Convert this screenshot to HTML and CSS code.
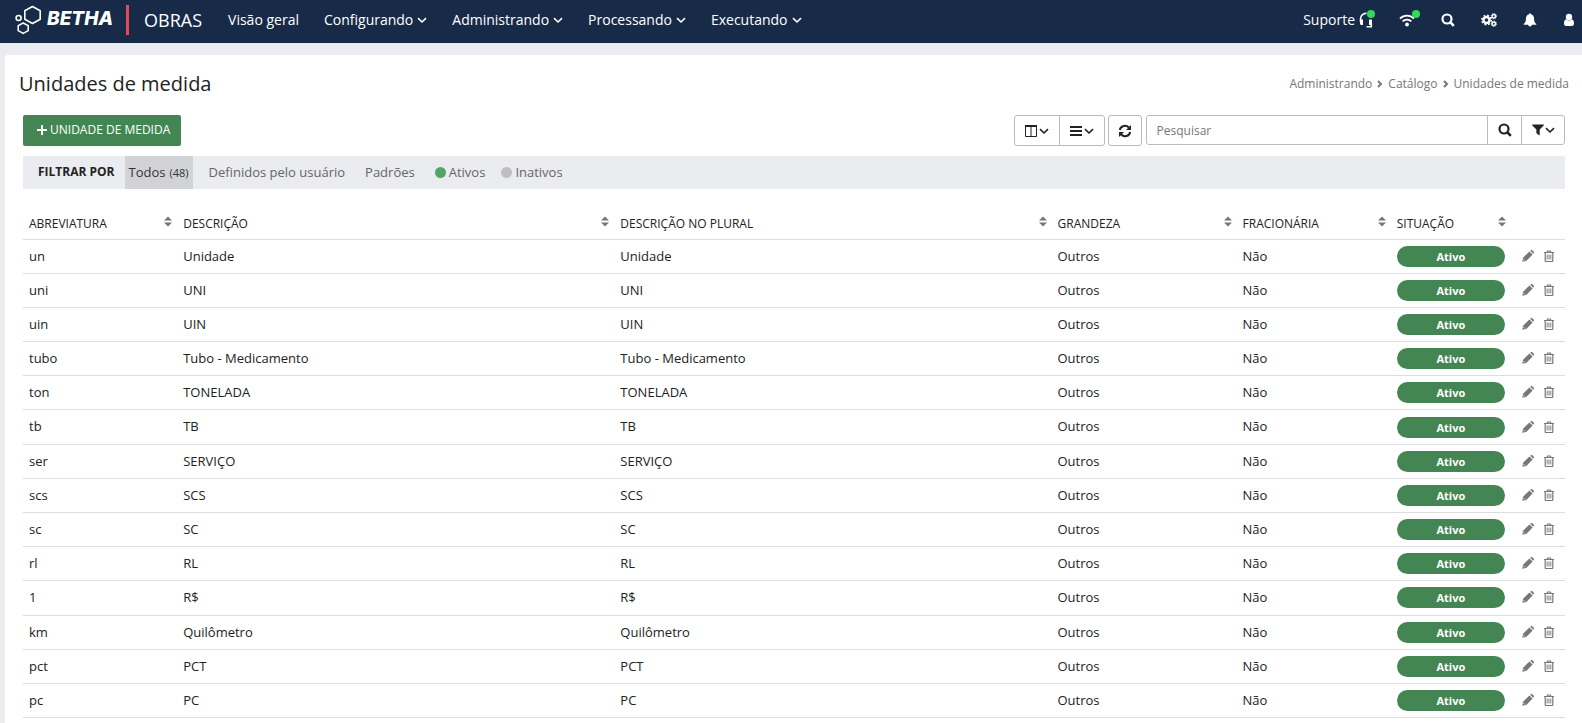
FILE: index.html
```
<!DOCTYPE html>
<html lang="pt-BR">
<head>
<meta charset="utf-8">
<meta name="viewport" content="width=device-width, initial-scale=1">
<title>Unidades de medida</title>
<link rel="stylesheet" href="styles.css">
</head>
<body>
<svg class="sprite" aria-hidden="true">
  <symbol id="chevron" viewBox="0 0 10 10"><path d="M1 3.200 5 7l4-3.800" fill="none" stroke="currentColor" stroke-width="1.600"/></symbol>
  <symbol id="chevron-right" viewBox="0 0 8 10"><path d="M2 2 5 5 2 8" fill="none" stroke="currentColor" stroke-width="2"/></symbol>
  <symbol id="plus" viewBox="0 0 12 12"><path d="M6 1v10M1 6h10" stroke="currentColor" stroke-width="2"/></symbol>
  <symbol id="search" viewBox="0 0 14 14"><circle cx="6" cy="6" r="4.500" fill="none" stroke="currentColor" stroke-width="2.200"/><path d="m9.200 9.200 3.600 3.600" stroke="currentColor" stroke-width="2.600"/></symbol>
  <symbol id="headset" viewBox="0 0 14 16"><path d="M1.500 10V7a5.500 5.500 0 0 1 6-5.600" fill="none" stroke="currentColor" stroke-width="1.600"/><path d="M1 7.500h3V13H2.600A1.600 1.600 0 0 1 1 11.400zM10 7.500h3V13h-3z" fill="currentColor"/><path d="M12.300 12v2.700H7.500" fill="none" stroke="currentColor" stroke-width="1.600"/></symbol>
  <symbol id="wifi" viewBox="0 0 16 14"><path d="M1 5.500a10 10 0 0 1 14 0M3.600 8.400a6.300 6.300 0 0 1 8.800 0" fill="none" stroke="currentColor" stroke-width="1.800"/><circle cx="8" cy="11.500" r="1.900" fill="currentColor"/></symbol>
  <symbol id="cogs" viewBox="0 0 16 14"><g fill="none" stroke="currentColor"><circle cx="5.500" cy="7" r="3" stroke-width="2.400"/><circle cx="5.500" cy="7" r="4.700" stroke-width="1.600" stroke-dasharray="1.850"/><circle cx="12.800" cy="3.200" r="1.700" stroke-width="1.500"/><circle cx="12.800" cy="3.200" r="2.700" stroke-width="1" stroke-dasharray="1.060"/><circle cx="12.800" cy="10.800" r="1.700" stroke-width="1.500"/><circle cx="12.800" cy="10.800" r="2.700" stroke-width="1" stroke-dasharray="1.060"/></g></symbol>
  <symbol id="bell" viewBox="0 0 14 14"><path d="M7 0.300c.6 0 .9.400.9.900C10 1.700 11 3.300 11 5.500c0 3 1 4.500 2.500 5.500 0 .6-.4.800-.9.800H8.800a1.800 1.800 0 0 1-3.600 0H1.400c-.5 0-.9-.2-.9-.8C2 10 3 8.500 3 5.500c0-2.200 1-3.800 3.100-4.300 0-.5.3-.9.900-.9z" fill="currentColor"/></symbol>
  <symbol id="user" viewBox="0 0 12 14"><circle cx="6" cy="4" r="3.200" fill="currentColor"/><path d="M3.300 6.300a4 4 0 0 0 5.400 0C10.500 6.700 11 8.500 11 10.600 11 12 10.200 13 9 13H3c-1.200 0-2-1-2-2.400 0-2.100.5-3.900 2.300-4.300z" fill="currentColor"/></symbol>
  <symbol id="columns" viewBox="0 0 14 14"><path d="M1.500 2v10.500h11V2M7 2v10.500" fill="none" stroke="currentColor"/><path d="M1 2h12" stroke="currentColor" stroke-width="2"/></symbol>
  <symbol id="bars" viewBox="0 0 14 14"><path d="M1 3h12M1 7h12M1 11h12" stroke="currentColor" stroke-width="2"/></symbol>
  <symbol id="refresh" viewBox="0 0 14 14"><path d="M1.800 6A5.200 5.200 0 0 1 10.800 3.500M12.200 8A5.200 5.200 0 0 1 3.200 10.500" fill="none" stroke="currentColor" stroke-width="2"/><path d="M13 1v5H8zM1 13V8h5z" fill="currentColor"/></symbol>
  <symbol id="filter" viewBox="0 0 12 14"><path d="M.7 1.500h10.600c.6 0 .8.600.4 1L7.700 6.600v5.900L4.400 10.200V6.600L.3 2.500c-.4-.4-.2-1 .4-1z" fill="currentColor"/></symbol>
  <symbol id="sort" viewBox="0 0 8 11"><path d="M4 .5 8 4.600H0zM4 10.500 8 6.400H0z" fill="currentColor"/></symbol>
  <symbol id="pencil" viewBox="0 0 12 12"><path d="m.3 11.700.8-4 6.300-6.300 3.200 3.200-6.300 6.300zM8.200.8 8.900.2c.4-.4 1-.4 1.400 0l1.500 1.500c.4.400.4 1 0 1.400l-.6.700z" fill="currentColor"/><path d="m1.600 9.100 1.300 1.300" stroke="#fff" stroke-width=".8"/></symbol>
  <symbol id="trash" viewBox="0 0 11 12"><path d="M.5 2.500h10M3.500 2.500l.6-1.500h2.800l.6 1.500M1.700 2.500v8.200c0 .5.300.8.700.8h6.200c.4 0 .7-.3.700-.8V2.500" fill="none" stroke="currentColor" stroke-width="1.200"/><path d="M3.700 4.500v5M5.500 4.500v5M7.300 4.500v5" stroke="currentColor" stroke-width=".9"/></symbol>
</svg>

<header class="topbar">
  <a class="brand" href="#" aria-label="Betha">
    <svg class="brand-mark" viewBox="0 0 28 30" aria-hidden="true"><g fill="none" stroke="currentColor" stroke-width="1.600" stroke-linejoin="round"><path d="m17.500 1.500 7.700 4.300v8.400l-7.700 4.300-7.700-4.300V5.800z"/><path d="m8.200 18 5 2.600v5l-5 2.800-5-2.800v-5z"/><circle cx="3.600" cy="13" r="2.500"/></g></svg>
    <span>BETHA</span>
  </a>
  <span class="product">OBRAS</span>
  <nav class="menu">
    <a href="#">Visão geral</a>
    <a href="#">Configurando <svg class="chev"><use href="#chevron"/></svg></a>
    <a href="#">Administrando <svg class="chev"><use href="#chevron"/></svg></a>
    <a href="#">Processando <svg class="chev"><use href="#chevron"/></svg></a>
    <a href="#">Executando <svg class="chev"><use href="#chevron"/></svg></a>
  </nav>
  <div class="tools">
    <a class="status" href="#">Suporte <svg class="icon-head"><use href="#headset"/></svg></a>
    <button class="status" aria-label="Conexão"><svg class="icon-wide"><use href="#wifi"/></svg></button>
    <button aria-label="Buscar"><svg class="icon"><use href="#search"/></svg></button>
    <button aria-label="Configurações"><svg class="icon-wide"><use href="#cogs"/></svg></button>
    <button aria-label="Notificações"><svg class="icon"><use href="#bell"/></svg></button>
    <button aria-label="Usuário"><svg class="icon-slim"><use href="#user"/></svg></button>
  </div>
</header>

<main class="page">
  <div class="heading">
    <h1>Unidades de medida</h1>
    <nav class="crumbs" aria-label="Trilha">
      <a href="#">Administrando</a><svg class="crumb-sep"><use href="#chevron-right"/></svg>
      <a href="#">Catálogo</a><svg class="crumb-sep"><use href="#chevron-right"/></svg>
      <span>Unidades de medida</span>
    </nav>
  </div>

  <div class="content">
    <div class="toolbar">
      <button class="primary"><svg class="icon-slim"><use href="#plus"/></svg>UNIDADE DE MEDIDA</button>
      <div class="group">
        <button class="wide" aria-label="Colunas"><svg class="icon"><use href="#columns"/></svg><svg class="chev"><use href="#chevron"/></svg></button>
        <button class="wide" aria-label="Densidade"><svg class="icon"><use href="#bars"/></svg><svg class="chev"><use href="#chevron"/></svg></button>
      </div>
      <div class="group"><button aria-label="Atualizar"><svg class="icon"><use href="#refresh"/></svg></button></div>
      <form class="group search">
        <input type="text" placeholder="Pesquisar" aria-label="Pesquisar">
        <button type="button" aria-label="Pesquisar"><svg class="icon"><use href="#search"/></svg></button>
        <button type="button" class="wide" aria-label="Filtros"><svg class="icon-slim"><use href="#filter"/></svg><svg class="chev"><use href="#chevron"/></svg></button>
      </form>
    </div>

    <div class="filters">
      <strong>FILTRAR POR</strong>
      <a class="active" href="#">Todos <small>(48)</small></a>
      <a href="#">Definidos pelo usuário</a>
      <a href="#">Padrões</a>
      <a class="state" href="#"><i class="dot dot-on"></i>Ativos</a>
      <a class="state" href="#"><i class="dot"></i>Inativos</a>
    </div>

    <table class="units">
      <colgroup><col class="c-abbr"><col class="c-desc"><col class="c-desc"><col class="c-kind"><col class="c-frac"><col class="c-state"><col></colgroup>
      <thead>
        <tr id="head"></tr>
      </thead>
      <tbody id="rows"></tbody>
    </table>
  </div>
</main>
<script src="app.js"></script>
</body>
</html>
```
FILE: styles.css
```
* { box-sizing: border-box; }
body {
  margin: 0;
  background: #ebecf0;
  color: #222;
  font: 13px/1.4 "Open Sans", "Noto Sans", sans-serif;
}
a { color: inherit; text-decoration: none; }
button { font: inherit; color: inherit; background: none; border: 0; padding: 0; cursor: pointer; }
svg { display: block; flex: none; }
.sprite { display: none; }
.icon { width: 14px; height: 14px; }
.icon-wide { width: 16px; height: 14px; }
.icon-slim { width: 12px; height: 14px; }
.icon-head { width: 14px; height: 16px; }
.chev { width: 10px; height: 10px; }

.topbar {
  display: flex;
  align-items: center;
  height: 43px;
  padding: 0 7px 4px 15px;
  background: #172b48;
  color: #fff;
  font-size: 14px;
}
.brand { display: flex; align-items: center; gap: 4px; font-family: Inter, "Open Sans", sans-serif; font-size: 19px; font-weight: 800; font-style: italic; }
.brand-mark { width: 28px; height: 30px; }
.product {
  margin-left: 13px;
  padding-left: 15px;
  border-left: 3px solid #e5475f;
  font-size: 18px;
  line-height: 30px;
}
.menu { display: flex; gap: 25px; margin-left: 26px; }
.menu a, .tools a { display: flex; align-items: center; gap: 4px; }
.tools { display: flex; align-items: center; gap: 26px; margin-left: auto; }
.status { position: relative; }
.status::after {
  content: "";
  position: absolute;
  top: -3px;
  right: -5px;
  width: 8px;
  height: 8px;
  border-radius: 50%;
  background: #2fdb57;
}
a.status::after { top: 0; right: -2px; }

.page { min-height: calc(100vh - 55px); margin: 12px 0 0 5px; padding: 13px 13px 6px 14px; background: #fff; border-top-left-radius: 3px; }
.heading { display: flex; justify-content: space-between; align-items: center; }
h1 { margin: 0; font-size: 20px; font-weight: 400; line-height: 32px; }
.crumbs { display: flex; align-items: center; gap: 4px; color: #777; font-size: 12px; }
.crumb-sep { width: 8px; height: 10px; }
.content { padding: 15px 4px 0; }

.toolbar { display: flex; align-items: flex-start; gap: 3px; }
.primary {
  display: flex;
  align-items: center;
  gap: 2px;
  height: 31px;
  margin-right: auto;
  padding: 0 11px 1px 13px;
  border-radius: 2px;
  background: #448653;
  color: #fff;
  font-size: 12px;
}
.group { display: flex; border: 1px solid #bbb; border-radius: 3px; }
.group button { display: flex; align-items: center; justify-content: center; gap: 1px; width: 32px; height: 29px; }
.group button.wide { width: 44px; }
.group > * + * { border-left: 1px solid #bbb; }
.group .wide + .wide { width: 45px; }
.search { width: 27.2%; margin-left: 1px; }
.search input { flex: 1; min-width: 0; height: 28px; padding: 0 10px; border: 0; border-radius: 3px; background: #fff; font: inherit; font-size: 12px; }
.search input::placeholder { color: #777; }
.group.search button { width: 34px; height: 28px; }
.group.search button.wide { width: 43px; }

.filters { display: flex; align-items: center; height: 33px; margin-top: 10px; padding-left: 15px; background: #ebecf0; color: #666; }
.filters strong { margin-right: 10px; color: #222; font-size: 12px; font-weight: 700; }
.filters a { display: flex; align-items: center; gap: 4px; margin-right: 16px; padding: 0 2px; line-height: 33px; }
.filters .active { margin-right: 14px; padding: 0 4px; background: #d2d3d6; color: #333; }
.filters .state { gap: 3px; margin-right: 12px; }
.filters small { font-size: 11px; }
.dot { width: 11px; height: 11px; border-radius: 50%; background: #bfbfbf; }
.dot-on { background: #53a566; }

.units { width: 100%; margin-top: 19px; table-layout: fixed; border-collapse: collapse; }
.c-abbr, .c-frac { width: 10%; }
.c-desc { width: 28.35%; }
.c-kind { width: 12%; }
.c-state { width: 7.8%; }
.units th, .units td { padding: 0 6px; border-bottom: 1px solid #ddd; text-align: left; white-space: nowrap; }
.units th { height: 31px; padding-top: 3px; font-size: 12px; font-weight: 400; }
.units td { padding-top: 7px; padding-bottom: 8px; }
.head-cell { display: flex; justify-content: space-between; }
.units th .head-cell { margin-right: -1px; }
.head-cell svg { width: 8px; height: 11px; color: #777; }
.badge { display: block; margin: -1px 0 -2px; border-radius: 11px; background: #448653; color: #fff; font-size: 11px; font-weight: 700; line-height: 21px; text-align: center; }
.actions { display: flex; gap: 9px; padding-left: 5px; color: #777; }
.actions svg { width: 12px; height: 12px; }
```
FILE: app.js
```
const heads = ["ABREVIATURA", "DESCRIÇÃO", "DESCRIÇÃO NO PLURAL", "GRANDEZA", "FRACIONÁRIA", "SITUAÇÃO"];
const units = [
  ["un", "Unidade"], ["uni", "UNI"], ["uin", "UIN"], ["tubo", "Tubo - Medicamento"],
  ["ton", "TONELADA"], ["tb", "TB"], ["ser", "SERVIÇO"], ["scs", "SCS"], ["sc", "SC"],
  ["rl", "RL"], ["1", "R$"], ["km", "Quilômetro"], ["pct", "PCT"], ["pc", "PC"]
];
document.getElementById("head").innerHTML = heads.map(h =>
  `<th scope="col"><div class="head-cell">${h}<svg><use href="#sort"/></svg></div></th>`).join("") + "<th></th>";
document.getElementById("rows").innerHTML = units.map(([abbr, name]) =>
  `<tr><td>${abbr}</td><td>${name}</td><td>${name}</td><td>Outros</td><td>Não</td>
  <td><span class="badge">Ativo</span></td>
  <td><div class="actions"><button aria-label="Editar ${abbr}"><svg><use href="#pencil"/></svg></button>
  <button aria-label="Excluir ${abbr}"><svg><use href="#trash"/></svg></button></div></td></tr>`).join("");
```
